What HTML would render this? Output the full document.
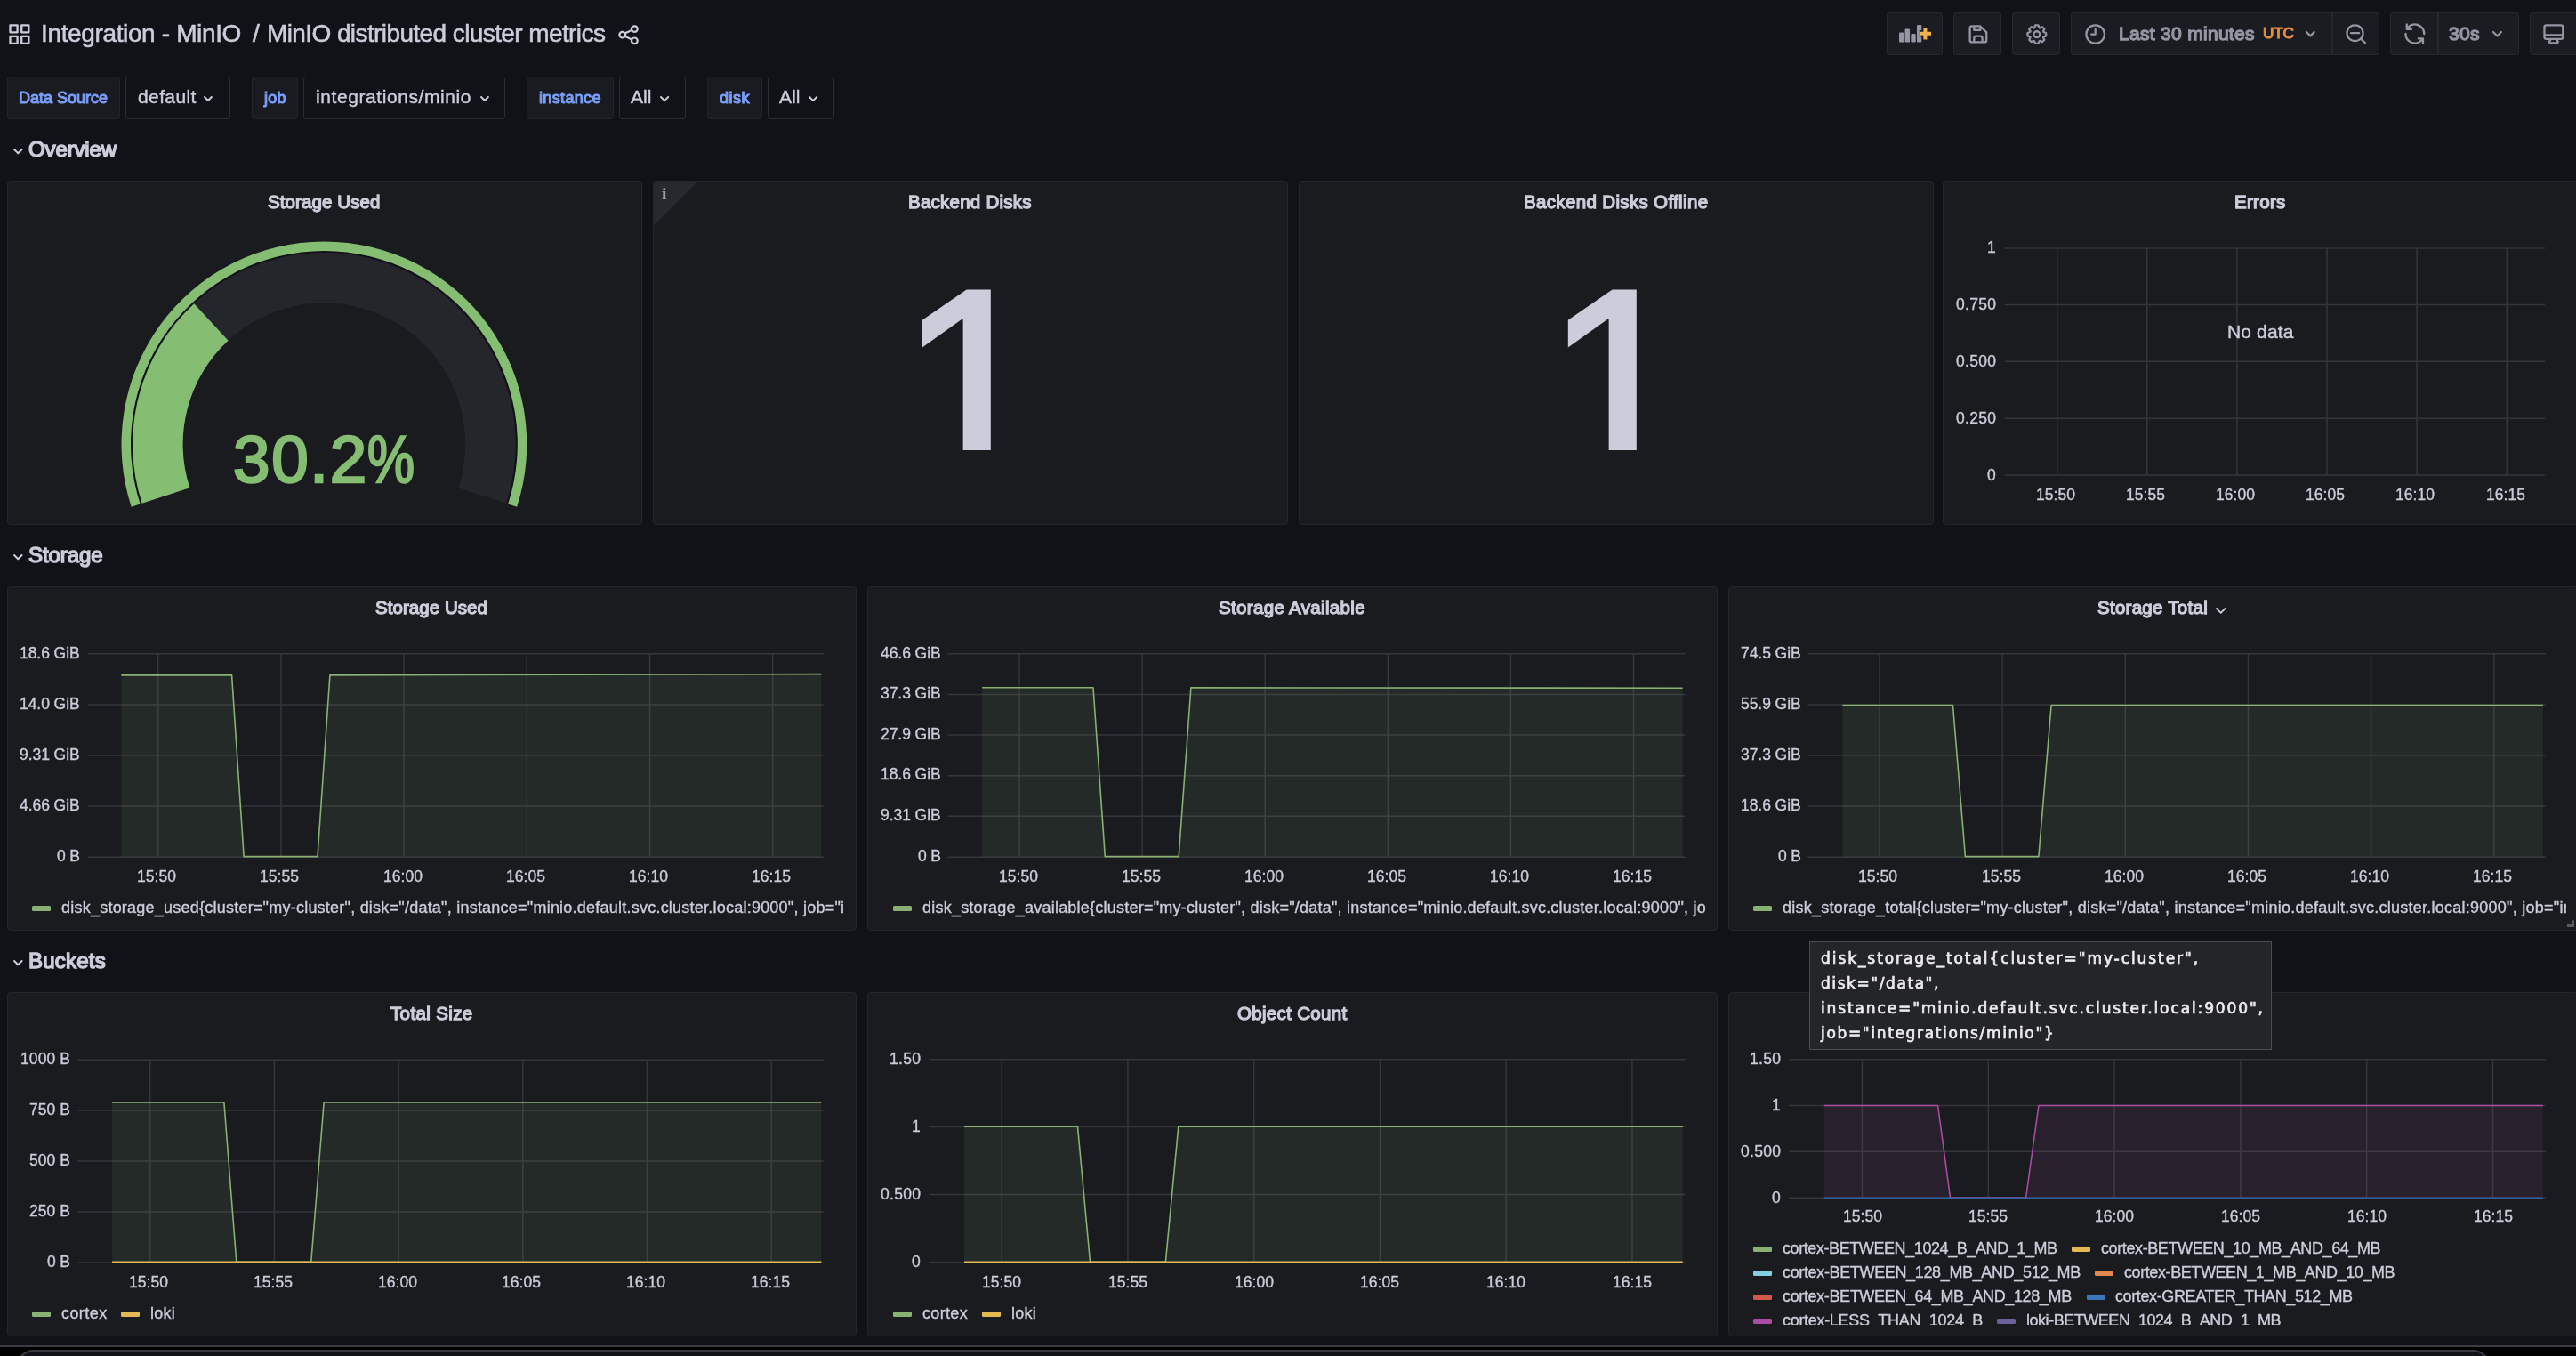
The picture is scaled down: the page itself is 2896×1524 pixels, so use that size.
<!DOCTYPE html>
<html lang="en"><head><meta charset="utf-8"><title>MinIO distributed cluster metrics - Grafana</title><style>
*{margin:0;padding:0}
html,body{width:2896px;height:1524px;overflow:hidden;background:#111217}
body{position:relative;font-family:"Liberation Sans",sans-serif;color:#ccccdb}
.abs,.t,.ic{position:absolute}
.bx{box-sizing:border-box}
.t{white-space:pre;display:block;will-change:transform}
article{overflow:hidden}
.ic{overflow:visible}
</style></head>
<body>
<header class="abs" style="left:0;top:0;width:2896px;height:76px"><svg class="ic" style="left:7.68px;top:25.23px" width="27.84" height="27.24" viewBox="0 0 24 24" preserveAspectRatio="none"><path fill="#ccccdb" d="M10,13H3a1,1,0,0,0-1,1v7a1,1,0,0,0,1,1h7a1,1,0,0,0,1-1V14A1,1,0,0,0,10,13ZM9,20H4V15H9ZM21,2H14a1,1,0,0,0-1,1v7a1,1,0,0,0,1,1h7a1,1,0,0,0,1-1V3A1,1,0,0,0,21,2ZM20,9H15V4h5Zm1,4H14a1,1,0,0,0-1,1v7a1,1,0,0,0,1,1h7a1,1,0,0,0,1-1V14A1,1,0,0,0,21,13Zm-1,7H15V15h5ZM10,2H3A1,1,0,0,0,2,3v7a1,1,0,0,0,1,1h7a1,1,0,0,0,1-1V3A1,1,0,0,0,10,2ZM9,9H4V4H9Z"/></svg>
<span class="t " style="left:46.00px;top:23.70px;font-size:28px;line-height:28px;color:#ccccdb;letter-spacing:-0.362px;-webkit-text-stroke:0.56px #ccccdb;">Integration - MinIO</span>
<span class="t " style="left:284.00px;top:23.70px;font-size:28px;line-height:28px;color:#ccccdb;letter-spacing:1.219px;-webkit-text-stroke:0.56px #ccccdb;">/</span>
<span class="t " style="left:300.00px;top:23.70px;font-size:28px;line-height:28px;color:#ccccdb;letter-spacing:-0.594px;-webkit-text-stroke:0.56px #ccccdb;">MinIO distributed cluster metrics</span>
<svg class="ic" style="left:692.94px;top:25.60px" width="27.12" height="26.40" viewBox="0 0 24 24" preserveAspectRatio="none"><path fill="#ccccdb" d="M18,14a4,4,0,0,0-3.08,1.48l-5.1-2.35a3.64,3.64,0,0,0,0-2.26l5.1-2.35A4,4,0,1,0,14,6a4.17,4.17,0,0,0,.07.71L8.79,9.14a4,4,0,1,0,0,5.72l5.28,2.43A4.17,4.17,0,0,0,14,18a4,4,0,1,0,4-4ZM18,4a2,2,0,1,1-2,2A2,2,0,0,1,18,4ZM6,14a2,2,0,1,1,2-2A2,2,0,0,1,6,14Zm12,6a2,2,0,1,1,2-2A2,2,0,0,1,18,20Z"/></svg>
<div class="abs bx" style="left:2121.00px;top:14.00px;width:63.00px;height:48.00px;background:#1b1c21;border:1.5px solid #26282d;border-radius:3px;"></div>
<div class="abs bx" style="left:2196.00px;top:14.00px;width:54.00px;height:48.00px;background:#1b1c21;border:1.5px solid #26282d;border-radius:3px;"></div>
<div class="abs bx" style="left:2262.00px;top:14.00px;width:54.00px;height:48.00px;background:#1b1c21;border:1.5px solid #26282d;border-radius:3px;"></div>
<div class="abs bx" style="left:2328.00px;top:14.00px;width:347.00px;height:48.00px;background:#1b1c21;border:1.5px solid #26282d;border-radius:3px;"></div>
<div class="abs bx" style="left:2687.00px;top:14.00px;width:145.00px;height:48.00px;background:#1b1c21;border:1.5px solid #26282d;border-radius:3px;"></div>
<div class="abs bx" style="left:2844.00px;top:14.00px;width:66.00px;height:48.00px;background:#1b1c21;border:1.5px solid #26282d;border-radius:3px;"></div>
<div class="abs" style="left:2621.00px;top:15.00px;width:1.50px;height:46.00px;background:#26282d"></div>
<div class="abs" style="left:2740.00px;top:15.00px;width:1.50px;height:46.00px;background:#26282d"></div>
<svg class="ic" style="left:2130px;top:24px" width="46" height="28"><rect x="5.0" y="12.5" width="5.3" height="10.9" rx="1" fill="#9595a3"/><rect x="11.6" y="8.5" width="5.4" height="14.9" rx="1" fill="#9595a3"/><rect x="18.3" y="14.0" width="5.4" height="9.4" rx="1" fill="#9595a3"/><rect x="25.0" y="4.0" width="5.3" height="19.4" rx="1" fill="#9595a3"/><path d="M27.8,13.8h13.2M34.4,7.2v13.4" stroke="#1b1c21" stroke-width="7.5" fill="none"/><path d="M27.8,13.8h13.2M34.4,7.2v13.4" stroke="#efb14d" stroke-width="4" fill="none"/></svg>
<svg class="ic" style="left:2209.52px;top:25.03px" width="27.87" height="26.93" viewBox="0 0 24 24" preserveAspectRatio="none"><path fill="#9595a3" d="M20.71,9.29l-6-6a1,1,0,0,0-.32-.21A1.09,1.09,0,0,0,14,3H6A3,3,0,0,0,3,6V18a3,3,0,0,0,3,3H18a3,3,0,0,0,3-3V10A1,1,0,0,0,20.71,9.29ZM9,5h4V7H9Zm6,14H9V16a1,1,0,0,1,1-1h4a1,1,0,0,1,1,1Zm4-1a1,1,0,0,1-1,1H17V16a3,3,0,0,0-3-3H10a3,3,0,0,0-3,3v3H6a1,1,0,0,1-1-1V6A1,1,0,0,1,6,5H7V8A1,1,0,0,0,8,9h6a1,1,0,0,0,1-1V6.41l4,4Z"/></svg>
<svg class="ic" style="left:2275.70px;top:24.92px" width="27.60" height="27.36" viewBox="0 0 24 24" preserveAspectRatio="none"><path fill="#9595a3" d="M21.32,9.55l-1.89-.63.89-1.78A1,1,0,0,0,20.13,6L18,3.87a1,1,0,0,0-1.15-.19l-1.78.89-.63-1.89A1,1,0,0,0,13.5,2h-3a1,1,0,0,0-.95.68L8.92,4.57,7.14,3.68A1,1,0,0,0,6,3.87L3.87,6a1,1,0,0,0-.19,1.15l.89,1.78-1.89.63A1,1,0,0,0,2,10.5v3a1,1,0,0,0,.68.95l1.89.63-.89,1.78A1,1,0,0,0,3.87,18L6,20.13a1,1,0,0,0,1.15.19l1.78-.89.63,1.89a1,1,0,0,0,.95.68h3a1,1,0,0,0,.95-.68l.63-1.89,1.78.89A1,1,0,0,0,18,20.13L20.13,18a1,1,0,0,0,.19-1.15l-.89-1.78,1.89-.63A1,1,0,0,0,22,13.5v-3A1,1,0,0,0,21.32,9.55ZM20,12.78l-1.2.4A2,2,0,0,0,17.64,16l.57,1.14-1.1,1.1L16,17.64a2,2,0,0,0-2.79,1.16l-.4,1.2H11.22l-.4-1.2A2,2,0,0,0,8,17.64l-1.14.57-1.1-1.1L6.36,16A2,2,0,0,0,5.2,13.18L4,12.78V11.22l1.2-.4A2,2,0,0,0,6.36,8L5.79,6.89l1.1-1.1L8,6.36A2,2,0,0,0,10.82,5.2l.4-1.2h1.56l.4,1.2A2,2,0,0,0,16,6.36l1.14-.57,1.1,1.1L17.64,8a2,2,0,0,0,1.16,2.79l1.2.4ZM12,8a4,4,0,1,0,4,4A4,4,0,0,0,12,8Zm0,6a2,2,0,1,1,2-2A2,2,0,0,1,12,14Z"/></svg>
<svg class="ic" style="left:2341.72px;top:24.84px" width="27.36" height="27.12" viewBox="0 0 24 24" preserveAspectRatio="none"><path fill="#9595a3" d="M12,2A10,10,0,1,0,22,12,10.01,10.01,0,0,0,12,2Zm0,18a8,8,0,1,1,8-8A8.01,8.01,0,0,1,12,20ZM12,6a1,1,0,0,0-1,1v4H8a1,1,0,0,0,0,2h4a1,1,0,0,0,1-1V7A1,1,0,0,0,12,6Z"/></svg>
<span class="t " style="left:2381.80px;top:27.02px;font-size:21px;line-height:21px;color:#9595a3;letter-spacing:0.302px;-webkit-text-stroke:1.30px #9595a3;">Last 30 minutes</span>
<span class="t " style="left:2544.40px;top:29.44px;font-size:17.2px;line-height:17.2px;color:#e38f3c;letter-spacing:-0.243px;-webkit-text-stroke:1.07px #e38f3c;">UTC</span>
<svg class="ic" style="left:2590.08px;top:33.22px" width="14.74" height="10.37"><path d="M3,3 L7.37,7.37 L11.74,3" fill="none" stroke="#9595a3" stroke-width="2.2" stroke-linecap="round" stroke-linejoin="round"/></svg>
<svg class="ic" style="left:2634.72px;top:24.88px" width="27.36" height="26.64" viewBox="0 0 24 24" preserveAspectRatio="none"><path fill="#9595a3" d="M21.71,20.29,18,16.61A9,9,0,1,0,16.61,18l3.68,3.68a1,1,0,0,0,1.42,0A1,1,0,0,0,21.71,20.29ZM11,18a7,7,0,1,1,7-7A7,7,0,0,1,11,18Zm4-8H7a1,1,0,0,0,0,2h8a1,1,0,0,0,0-2Z"/></svg>
<svg class="ic" style="left:2700.59px;top:24.26px" width="27.72" height="28.08" viewBox="0 0 24 24" preserveAspectRatio="none"><path fill="#9595a3" d="M19.91,15.51H15.38a1,1,0,0,0,0,2h2.4A8,8,0,0,1,4,12a1,1,0,0,0-2,0,10,10,0,0,0,16.88,7.23V21a1,1,0,0,0,2,0V16.5A1,1,0,0,0,19.91,15.51ZM12,2A10,10,0,0,0,5.12,4.77V3a1,1,0,0,0-2,0V7.5a1,1,0,0,0,1,1h4.5a1,1,0,0,0,0-2H6.22A8,8,0,0,1,20,12a1,1,0,0,0,2,0A10,10,0,0,0,12,2Z"/></svg>
<span class="t " style="left:2753.30px;top:27.02px;font-size:21px;line-height:21px;color:#9595a3;letter-spacing:0.280px;-webkit-text-stroke:1.30px #9595a3;">30s</span>
<svg class="ic" style="left:2799.58px;top:33.16px" width="14.94" height="10.47"><path d="M3,3 L7.47,7.47 L11.94,3" fill="none" stroke="#9595a3" stroke-width="2.2" stroke-linecap="round" stroke-linejoin="round"/></svg>
<svg class="ic" style="left:2857.49px;top:25.28px" width="27.72" height="26.64" viewBox="0 0 24 24" preserveAspectRatio="none"><path fill="#9595a3" d="M19,2H5A3,3,0,0,0,2,5V15a3,3,0,0,0,3,3H7.64l-.58,1a2,2,0,0,0,0,2,2,2,0,0,0,1.75,1h6.46A2,2,0,0,0,17,21a2,2,0,0,0,0-2l-.59-1H19a3,3,0,0,0,3-3V5A3,3,0,0,0,19,2ZM8.77,20,9.93,18h4.14l1.16,2ZM20,15a1,1,0,0,1-1,1H5a1,1,0,0,1-1-1V14H20Zm0-3H4V5A1,1,0,0,1,5,4H19a1,1,0,0,1,1,1Z"/></svg></header>
<nav class="abs" style="left:0;top:76px;width:2896px;height:64px"><div class="abs" style="left:0;top:-76px"><div class="abs bx" style="left:8.00px;top:86.00px;width:127.00px;height:48.00px;background:#1a1b20;border:1.5px solid #222429;border-radius:3px;"></div>
<span class="t " style="left:21.30px;top:100.76px;font-size:18px;line-height:18px;color:#799ef8;-webkit-text-stroke:1.12px #799ef8;">Data Source</span>
<div class="abs bx" style="left:141.00px;top:86.00px;width:118.00px;height:48.00px;background:#111217;border:1.5px solid #2a2c31;border-radius:3px;"></div>
<span class="t " style="left:154.90px;top:98.22px;font-size:21px;line-height:21px;color:#ccccdb;letter-spacing:0.391px;-webkit-text-stroke:0.42px #ccccdb;">default</span>
<svg class="ic" style="left:227.30px;top:105.83px" width="13.90" height="9.95"><path d="M3,3 L6.95,6.95 L10.90,3" fill="none" stroke="#ccccdb" stroke-width="2" stroke-linecap="round" stroke-linejoin="round"/></svg>
<div class="abs bx" style="left:283.20px;top:86.00px;width:51.50px;height:48.00px;background:#1a1b20;border:1.5px solid #222429;border-radius:3px;"></div>
<span class="t " style="left:296.60px;top:100.76px;font-size:18px;line-height:18px;color:#799ef8;letter-spacing:0.190px;-webkit-text-stroke:1.12px #799ef8;">job</span>
<div class="abs bx" style="left:341.30px;top:86.00px;width:226.50px;height:48.00px;background:#111217;border:1.5px solid #2a2c31;border-radius:3px;"></div>
<span class="t " style="left:355.00px;top:98.22px;font-size:21px;line-height:21px;color:#ccccdb;letter-spacing:0.578px;-webkit-text-stroke:0.42px #ccccdb;">integrations/minio</span>
<svg class="ic" style="left:537.60px;top:105.82px" width="13.90" height="9.95"><path d="M3,3 L6.95,6.95 L10.90,3" fill="none" stroke="#ccccdb" stroke-width="2" stroke-linecap="round" stroke-linejoin="round"/></svg>
<div class="abs bx" style="left:592.10px;top:86.00px;width:97.60px;height:48.00px;background:#1a1b20;border:1.5px solid #222429;border-radius:3px;"></div>
<span class="t " style="left:606.00px;top:100.76px;font-size:18px;line-height:18px;color:#799ef8;letter-spacing:0.344px;-webkit-text-stroke:1.12px #799ef8;">instance</span>
<div class="abs bx" style="left:696.00px;top:86.00px;width:74.80px;height:48.00px;background:#111217;border:1.5px solid #2a2c31;border-radius:3px;"></div>
<span class="t " style="left:709.30px;top:98.22px;font-size:21px;line-height:21px;color:#ccccdb;letter-spacing:0.052px;-webkit-text-stroke:0.42px #ccccdb;">All</span>
<svg class="ic" style="left:740.30px;top:105.75px" width="14.20" height="10.10"><path d="M3,3 L7.10,7.10 L11.20,3" fill="none" stroke="#ccccdb" stroke-width="2" stroke-linecap="round" stroke-linejoin="round"/></svg>
<div class="abs bx" style="left:795.30px;top:86.00px;width:61.30px;height:48.00px;background:#1a1b20;border:1.5px solid #222429;border-radius:3px;"></div>
<span class="t " style="left:808.80px;top:100.76px;font-size:18px;line-height:18px;color:#799ef8;letter-spacing:0.521px;-webkit-text-stroke:1.12px #799ef8;">disk</span>
<div class="abs bx" style="left:863.20px;top:86.00px;width:74.70px;height:48.00px;background:#111217;border:1.5px solid #2a2c31;border-radius:3px;"></div>
<span class="t " style="left:876.40px;top:98.22px;font-size:21px;line-height:21px;color:#ccccdb;letter-spacing:0.052px;-webkit-text-stroke:0.42px #ccccdb;">All</span>
<svg class="ic" style="left:907.40px;top:105.75px" width="14.20" height="10.10"><path d="M3,3 L7.10,7.10 L11.20,3" fill="none" stroke="#ccccdb" stroke-width="2" stroke-linecap="round" stroke-linejoin="round"/></svg></div></nav>
<section class="abs" style="left:0;top:0"><svg class="ic" style="left:12.60px;top:165.35px" width="14.60" height="10.30"><path d="M3,3 L7.30,7.30 L11.60,3" fill="none" stroke="#ccccdb" stroke-width="2" stroke-linecap="round" stroke-linejoin="round"/></svg>
<span class="t " style="left:32.00px;top:156.48px;font-size:24px;line-height:24px;color:#ccccdb;letter-spacing:-0.129px;-webkit-text-stroke:1.49px #ccccdb;">Overview</span></section>
<section class="abs" style="left:0;top:0"><svg class="ic" style="left:12.60px;top:621.35px" width="14.60" height="10.30"><path d="M3,3 L7.30,7.30 L11.60,3" fill="none" stroke="#ccccdb" stroke-width="2" stroke-linecap="round" stroke-linejoin="round"/></svg>
<span class="t " style="left:32.00px;top:612.48px;font-size:24px;line-height:24px;color:#ccccdb;letter-spacing:-0.066px;-webkit-text-stroke:1.49px #ccccdb;">Storage</span></section>
<section class="abs" style="left:0;top:0"><svg class="ic" style="left:12.60px;top:1077.35px" width="14.60" height="10.30"><path d="M3,3 L7.30,7.30 L11.60,3" fill="none" stroke="#ccccdb" stroke-width="2" stroke-linecap="round" stroke-linejoin="round"/></svg>
<span class="t " style="left:32.00px;top:1068.48px;font-size:24px;line-height:24px;color:#ccccdb;letter-spacing:0.232px;-webkit-text-stroke:1.49px #ccccdb;">Buckets</span></section>
<article class="abs bx" style="left:8px;top:203px;width:714px;height:387px;background:#191b1f;border:1px solid #24262b;border-radius:4px;"><div class="abs" style="left:-1px;top:-1px"><span class="t " style="left:293.20px;top:14.15px;font-size:20.5px;line-height:20.5px;color:#ccccdb;letter-spacing:0.103px;-webkit-text-stroke:1.27px #ccccdb;">Storage Used</span><svg class="ic" style="left:0;top:0" width="713" height="386"><path fill="#111217" d="M149.45,363.54A217.6,217.6 0 1 1 563.35,363.54L560.88,362.74A215,215 0 1 0 151.92,362.74Z"/><path fill="#85bd72" d="M139.65,366.72A227.9,227.9 0 1 1 573.15,366.72L563.16,363.48A217.4,217.4 0 1 0 149.64,363.48Z"/><path fill="#24262b" d="M151.64,362.83A215.3,215.3 0 1 1 561.16,362.83L507.43,345.37A158.8,158.8 0 1 0 205.37,345.37Z"/><path fill="#85bd72" d="M151.64,362.83A215.3,215.3 0 0 1 210.20,138.25L248.57,179.72A158.8,158.8 0 0 0 205.37,345.37Z"/></svg><span class="t" style="left:253.80px;top:276.94px;font-size:74.5px;line-height:74.5px;color:#85bd72;letter-spacing:1.7px;-webkit-text-stroke:2.6px #85bd72">30.2<span style="display:inline-block;letter-spacing:0;transform:scaleX(.8);transform-origin:0 0;margin-left:-0.8px">%</span></span></div></article>
<article class="abs bx" style="left:734px;top:203px;width:714px;height:387px;background:#191b1f;border:1px solid #24262b;border-radius:4px;"><div class="abs" style="left:-1px;top:-1px"><span class="t " style="left:287.15px;top:14.15px;font-size:20.5px;line-height:20.5px;color:#ccccdb;letter-spacing:0.239px;-webkit-text-stroke:1.27px #ccccdb;">Backend Disks</span><svg class="ic" style="left:1px;top:2px" width="50" height="50"><path d="M0,3 Q0,0 3,0 L48.5,0 L0,48.5Z" fill="#262a2f"/></svg><span class="t" style="left:9.7px;top:4px;font-size:19.5px;line-height:22px;font-family:'Liberation Serif',serif;font-weight:700;color:#9d9eab">i</span><div class="abs" style="left:0;top:97px;width:713px;height:206px;overflow:hidden"><span class="t " style="left:277.10px;top:-17.82px;font-size:295px;line-height:295px;color:#ccccdb;-webkit-text-stroke:5.10px #ccccdb;">1</span></div></div></article>
<article class="abs bx" style="left:1460px;top:203px;width:714px;height:387px;background:#191b1f;border:1px solid #24262b;border-radius:4px;"><div class="abs" style="left:-1px;top:-1px"><span class="t " style="left:252.80px;top:14.15px;font-size:20.5px;line-height:20.5px;color:#ccccdb;letter-spacing:0.345px;-webkit-text-stroke:1.27px #ccccdb;">Backend Disks Offline</span><div class="abs" style="left:0;top:97px;width:713px;height:206px;overflow:hidden"><span class="t " style="left:277.10px;top:-17.82px;font-size:295px;line-height:295px;color:#ccccdb;-webkit-text-stroke:5.10px #ccccdb;">1</span></div></div></article>
<article class="abs bx" style="left:2184px;top:203px;width:715px;height:387px;background:#191b1f;border:1px solid #24262b;border-radius:4px;"><div class="abs" style="left:-1px;top:-1px"><span class="t " style="left:327.70px;top:14.15px;font-size:20.5px;line-height:20.5px;color:#ccccdb;letter-spacing:0.298px;-webkit-text-stroke:1.27px #ccccdb;">Errors</span><svg class="ic" style="left:0;top:0" width="714" height="387"><path d="M69.7,75.90H677.0" stroke="#34363b" stroke-width="1.5"/><path d="M69.7,139.40H677.0" stroke="#34363b" stroke-width="1.5"/><path d="M69.7,203.30H677.0" stroke="#34363b" stroke-width="1.5"/><path d="M69.7,267.20H677.0" stroke="#34363b" stroke-width="1.5"/><path d="M69.7,331.10H677.0" stroke="#34363b" stroke-width="1.5"/><path d="M128.70,75.9V331.1" stroke="#34363b" stroke-width="1.5"/><path d="M229.80,75.9V331.1" stroke="#34363b" stroke-width="1.5"/><path d="M330.90,75.9V331.1" stroke="#34363b" stroke-width="1.5"/><path d="M432.00,75.9V331.1" stroke="#34363b" stroke-width="1.5"/><path d="M533.10,75.9V331.1" stroke="#34363b" stroke-width="1.5"/><path d="M634.20,75.9V331.1" stroke="#34363b" stroke-width="1.5"/></svg><span class="t " style="left:50.30px;top:67.49px;font-size:17.5px;line-height:17.5px;color:#ccccdb;letter-spacing:0.366px;-webkit-text-stroke:0.35px #ccccdb;">1</span>
<span class="t " style="left:15.10px;top:130.99px;font-size:17.5px;line-height:17.5px;color:#ccccdb;letter-spacing:0.301px;-webkit-text-stroke:0.35px #ccccdb;">0.750</span>
<span class="t " style="left:15.10px;top:194.89px;font-size:17.5px;line-height:17.5px;color:#ccccdb;letter-spacing:0.301px;-webkit-text-stroke:0.35px #ccccdb;">0.500</span>
<span class="t " style="left:15.10px;top:258.79px;font-size:17.5px;line-height:17.5px;color:#ccccdb;letter-spacing:0.301px;-webkit-text-stroke:0.35px #ccccdb;">0.250</span>
<span class="t " style="left:50.30px;top:322.69px;font-size:17.5px;line-height:17.5px;color:#ccccdb;letter-spacing:0.366px;-webkit-text-stroke:0.35px #ccccdb;">0</span>
<span class="t " style="left:105.00px;top:344.69px;font-size:17.5px;line-height:17.5px;color:#ccccdb;letter-spacing:0.041px;-webkit-text-stroke:0.35px #ccccdb;">15:50</span>
<span class="t " style="left:206.10px;top:344.69px;font-size:17.5px;line-height:17.5px;color:#ccccdb;letter-spacing:0.041px;-webkit-text-stroke:0.35px #ccccdb;">15:55</span>
<span class="t " style="left:307.20px;top:344.69px;font-size:17.5px;line-height:17.5px;color:#ccccdb;letter-spacing:0.041px;-webkit-text-stroke:0.35px #ccccdb;">16:00</span>
<span class="t " style="left:408.30px;top:344.69px;font-size:17.5px;line-height:17.5px;color:#ccccdb;letter-spacing:0.041px;-webkit-text-stroke:0.35px #ccccdb;">16:05</span>
<span class="t " style="left:509.40px;top:344.69px;font-size:17.5px;line-height:17.5px;color:#ccccdb;letter-spacing:0.041px;-webkit-text-stroke:0.35px #ccccdb;">16:10</span>
<span class="t " style="left:610.50px;top:344.69px;font-size:17.5px;line-height:17.5px;color:#ccccdb;letter-spacing:0.041px;-webkit-text-stroke:0.35px #ccccdb;">16:15</span>
<span class="t " style="left:319.75px;top:158.72px;font-size:21px;line-height:21px;color:#ccccdb;letter-spacing:0.134px;-webkit-text-stroke:0.42px #ccccdb;">No data</span></div></article>
<article class="abs bx" style="left:8px;top:659px;width:955px;height:387px;background:#191b1f;border:1px solid #24262b;border-radius:4px;"><div class="abs" style="left:-1px;top:-1px"><span class="t " style="left:414.00px;top:14.15px;font-size:20.5px;line-height:20.5px;color:#ccccdb;letter-spacing:0.053px;-webkit-text-stroke:1.27px #ccccdb;">Storage Used</span><svg class="ic" style="left:0;top:0" width="956" height="387"><path d="M90.7,75.80H918.3" stroke="#34363b" stroke-width="1.5"/><path d="M90.7,133.00H918.3" stroke="#34363b" stroke-width="1.5"/><path d="M90.7,190.00H918.3" stroke="#34363b" stroke-width="1.5"/><path d="M90.7,247.10H918.3" stroke="#34363b" stroke-width="1.5"/><path d="M90.7,304.30H918.3" stroke="#34363b" stroke-width="1.5"/><path d="M169.70,75.8V304.3" stroke="#34363b" stroke-width="1.5"/><path d="M307.90,75.8V304.3" stroke="#34363b" stroke-width="1.5"/><path d="M446.10,75.8V304.3" stroke="#34363b" stroke-width="1.5"/><path d="M584.30,75.8V304.3" stroke="#34363b" stroke-width="1.5"/><path d="M722.50,75.8V304.3" stroke="#34363b" stroke-width="1.5"/><path d="M860.70,75.8V304.3" stroke="#34363b" stroke-width="1.5"/><path d="M128.3,99.9 L252.6,99.9 L266.1,303.6 L349.0,303.6 L362.9,99.9 L915.3,98.6 L915.3,304.3 L128.3,304.3Z" fill="#89b174" fill-opacity="0.1"/><path d="M128.3,99.9 L252.6,99.9 L266.1,303.6 L349.0,303.6 L362.9,99.9 L915.3,98.6" fill="none" stroke="#89b174" stroke-width="1.6" stroke-linejoin="round"/></svg><span class="t " style="left:14.20px;top:66.59px;font-size:17.5px;line-height:17.5px;color:#ccccdb;letter-spacing:-0.064px;-webkit-text-stroke:0.35px #ccccdb;">18.6 GiB</span>
<span class="t " style="left:14.20px;top:123.79px;font-size:17.5px;line-height:17.5px;color:#ccccdb;letter-spacing:-0.064px;-webkit-text-stroke:0.35px #ccccdb;">14.0 GiB</span>
<span class="t " style="left:14.20px;top:180.79px;font-size:17.5px;line-height:17.5px;color:#ccccdb;letter-spacing:-0.064px;-webkit-text-stroke:0.35px #ccccdb;">9.31 GiB</span>
<span class="t " style="left:14.20px;top:237.89px;font-size:17.5px;line-height:17.5px;color:#ccccdb;letter-spacing:-0.064px;-webkit-text-stroke:0.35px #ccccdb;">4.66 GiB</span>
<span class="t " style="left:56.00px;top:295.09px;font-size:17.5px;line-height:17.5px;color:#ccccdb;letter-spacing:-0.160px;-webkit-text-stroke:0.35px #ccccdb;">0 B</span>
<span class="t " style="left:146.25px;top:317.59px;font-size:17.5px;line-height:17.5px;color:#ccccdb;letter-spacing:0.041px;-webkit-text-stroke:0.35px #ccccdb;">15:50</span>
<span class="t " style="left:284.45px;top:317.59px;font-size:17.5px;line-height:17.5px;color:#ccccdb;letter-spacing:0.041px;-webkit-text-stroke:0.35px #ccccdb;">15:55</span>
<span class="t " style="left:422.65px;top:317.59px;font-size:17.5px;line-height:17.5px;color:#ccccdb;letter-spacing:0.041px;-webkit-text-stroke:0.35px #ccccdb;">16:00</span>
<span class="t " style="left:560.85px;top:317.59px;font-size:17.5px;line-height:17.5px;color:#ccccdb;letter-spacing:0.041px;-webkit-text-stroke:0.35px #ccccdb;">16:05</span>
<span class="t " style="left:699.05px;top:317.59px;font-size:17.5px;line-height:17.5px;color:#ccccdb;letter-spacing:0.041px;-webkit-text-stroke:0.35px #ccccdb;">16:10</span>
<span class="t " style="left:837.25px;top:317.59px;font-size:17.5px;line-height:17.5px;color:#ccccdb;letter-spacing:0.041px;-webkit-text-stroke:0.35px #ccccdb;">16:15</span>
<div class="abs" style="left:27.80px;top:358.80px;width:21.00px;height:6.00px;background:#89b174;border-radius:1.5px"></div>
<div class="abs" style="left:56.9px;top:347.8px;width:885.0px;height:28px;overflow:hidden"><span class="t " style="left:4.00px;top:4.26px;font-size:18px;line-height:18px;color:#ccccdb;letter-spacing:0.230px;-webkit-text-stroke:0.36px #ccccdb;">disk_storage_used{cluster=&quot;my-cluster&quot;, disk=&quot;/data&quot;, instance=&quot;minio.default.svc.cluster.local:9000&quot;, job=&quot;integrations/minio&quot;}</span></div></div></article>
<article class="abs bx" style="left:975px;top:659px;width:956px;height:387px;background:#191b1f;border:1px solid #24262b;border-radius:4px;"><div class="abs" style="left:-1px;top:-1px"><span class="t " style="left:395.00px;top:14.15px;font-size:20.5px;line-height:20.5px;color:#ccccdb;letter-spacing:0.342px;-webkit-text-stroke:1.27px #ccccdb;">Storage Available</span><svg class="ic" style="left:0;top:0" width="956" height="387"><path d="M90.4,75.80H919.7" stroke="#34363b" stroke-width="1.5"/><path d="M90.4,121.40H919.7" stroke="#34363b" stroke-width="1.5"/><path d="M90.4,167.00H919.7" stroke="#34363b" stroke-width="1.5"/><path d="M90.4,212.70H919.7" stroke="#34363b" stroke-width="1.5"/><path d="M90.4,258.30H919.7" stroke="#34363b" stroke-width="1.5"/><path d="M90.4,304.30H919.7" stroke="#34363b" stroke-width="1.5"/><path d="M171.00,75.8V304.3" stroke="#34363b" stroke-width="1.5"/><path d="M309.10,75.8V304.3" stroke="#34363b" stroke-width="1.5"/><path d="M447.20,75.8V304.3" stroke="#34363b" stroke-width="1.5"/><path d="M585.30,75.8V304.3" stroke="#34363b" stroke-width="1.5"/><path d="M723.40,75.8V304.3" stroke="#34363b" stroke-width="1.5"/><path d="M861.50,75.8V304.3" stroke="#34363b" stroke-width="1.5"/><path d="M129.2,113.8 L254.0,113.8 L267.3,303.6 L350.2,303.6 L363.9,113.8 L916.7,114.3 L916.7,304.3 L129.2,304.3Z" fill="#89b174" fill-opacity="0.1"/><path d="M129.2,113.8 L254.0,113.8 L267.3,303.6 L350.2,303.6 L363.9,113.8 L916.7,114.3" fill="none" stroke="#89b174" stroke-width="1.6" stroke-linejoin="round"/></svg><span class="t " style="left:15.40px;top:66.59px;font-size:17.5px;line-height:17.5px;color:#ccccdb;letter-spacing:-0.064px;-webkit-text-stroke:0.35px #ccccdb;">46.6 GiB</span>
<span class="t " style="left:15.40px;top:112.19px;font-size:17.5px;line-height:17.5px;color:#ccccdb;letter-spacing:-0.064px;-webkit-text-stroke:0.35px #ccccdb;">37.3 GiB</span>
<span class="t " style="left:15.40px;top:157.79px;font-size:17.5px;line-height:17.5px;color:#ccccdb;letter-spacing:-0.064px;-webkit-text-stroke:0.35px #ccccdb;">27.9 GiB</span>
<span class="t " style="left:15.40px;top:203.49px;font-size:17.5px;line-height:17.5px;color:#ccccdb;letter-spacing:-0.064px;-webkit-text-stroke:0.35px #ccccdb;">18.6 GiB</span>
<span class="t " style="left:15.40px;top:249.09px;font-size:17.5px;line-height:17.5px;color:#ccccdb;letter-spacing:-0.064px;-webkit-text-stroke:0.35px #ccccdb;">9.31 GiB</span>
<span class="t " style="left:57.20px;top:295.09px;font-size:17.5px;line-height:17.5px;color:#ccccdb;letter-spacing:-0.160px;-webkit-text-stroke:0.35px #ccccdb;">0 B</span>
<span class="t " style="left:147.55px;top:317.59px;font-size:17.5px;line-height:17.5px;color:#ccccdb;letter-spacing:0.041px;-webkit-text-stroke:0.35px #ccccdb;">15:50</span>
<span class="t " style="left:285.65px;top:317.59px;font-size:17.5px;line-height:17.5px;color:#ccccdb;letter-spacing:0.041px;-webkit-text-stroke:0.35px #ccccdb;">15:55</span>
<span class="t " style="left:423.75px;top:317.59px;font-size:17.5px;line-height:17.5px;color:#ccccdb;letter-spacing:0.041px;-webkit-text-stroke:0.35px #ccccdb;">16:00</span>
<span class="t " style="left:561.85px;top:317.59px;font-size:17.5px;line-height:17.5px;color:#ccccdb;letter-spacing:0.041px;-webkit-text-stroke:0.35px #ccccdb;">16:05</span>
<span class="t " style="left:699.95px;top:317.59px;font-size:17.5px;line-height:17.5px;color:#ccccdb;letter-spacing:0.041px;-webkit-text-stroke:0.35px #ccccdb;">16:10</span>
<span class="t " style="left:838.05px;top:317.59px;font-size:17.5px;line-height:17.5px;color:#ccccdb;letter-spacing:0.041px;-webkit-text-stroke:0.35px #ccccdb;">16:15</span>
<div class="abs" style="left:29.10px;top:358.80px;width:21.00px;height:6.00px;background:#89b174;border-radius:1.5px"></div>
<div class="abs" style="left:58.2px;top:347.8px;width:885.1px;height:28px;overflow:hidden"><span class="t " style="left:4.00px;top:4.26px;font-size:18px;line-height:18px;color:#ccccdb;letter-spacing:0.225px;-webkit-text-stroke:0.36px #ccccdb;">disk_storage_available{cluster=&quot;my-cluster&quot;, disk=&quot;/data&quot;, instance=&quot;minio.default.svc.cluster.local:9000&quot;, job=&quot;integrations/minio&quot;}</span></div></div></article>
<article class="abs bx" style="left:1943px;top:659px;width:956px;height:387px;background:#191b1f;border:1px solid #24262b;border-radius:4px;"><div class="abs" style="left:-1px;top:-1px"><span class="t " style="left:414.50px;top:14.15px;font-size:20.5px;line-height:20.5px;color:#ccccdb;letter-spacing:0.274px;-webkit-text-stroke:1.27px #ccccdb;">Storage Total</span><svg class="ic" style="left:546.22px;top:21.61px" width="15.56" height="10.78"><path d="M3,3 L7.78,7.78 L12.56,3" fill="none" stroke="#ccccdb" stroke-width="1.8" stroke-linecap="round" stroke-linejoin="round"/></svg><svg class="ic" style="left:0;top:0" width="956" height="387"><path d="M89.4,75.80H918.9" stroke="#34363b" stroke-width="1.5"/><path d="M89.4,132.90H918.9" stroke="#34363b" stroke-width="1.5"/><path d="M89.4,189.90H918.9" stroke="#34363b" stroke-width="1.5"/><path d="M89.4,246.90H918.9" stroke="#34363b" stroke-width="1.5"/><path d="M89.4,304.30H918.9" stroke="#34363b" stroke-width="1.5"/><path d="M170.00,75.8V304.3" stroke="#34363b" stroke-width="1.5"/><path d="M308.15,75.8V304.3" stroke="#34363b" stroke-width="1.5"/><path d="M446.30,75.8V304.3" stroke="#34363b" stroke-width="1.5"/><path d="M584.45,75.8V304.3" stroke="#34363b" stroke-width="1.5"/><path d="M722.60,75.8V304.3" stroke="#34363b" stroke-width="1.5"/><path d="M860.75,75.8V304.3" stroke="#34363b" stroke-width="1.5"/><path d="M128.4,133.6 L252.5,133.6 L266.4,303.6 L348.9,303.6 L363.1,133.6 L915.9,133.6 L915.9,304.3 L128.4,304.3Z" fill="#89b174" fill-opacity="0.1"/><path d="M128.4,133.6 L252.5,133.6 L266.4,303.6 L348.9,303.6 L363.1,133.6 L915.9,133.6" fill="none" stroke="#89b174" stroke-width="1.6" stroke-linejoin="round"/></svg><span class="t " style="left:13.70px;top:66.59px;font-size:17.5px;line-height:17.5px;color:#ccccdb;letter-spacing:-0.064px;-webkit-text-stroke:0.35px #ccccdb;">74.5 GiB</span>
<span class="t " style="left:13.70px;top:123.69px;font-size:17.5px;line-height:17.5px;color:#ccccdb;letter-spacing:-0.064px;-webkit-text-stroke:0.35px #ccccdb;">55.9 GiB</span>
<span class="t " style="left:13.70px;top:180.69px;font-size:17.5px;line-height:17.5px;color:#ccccdb;letter-spacing:-0.064px;-webkit-text-stroke:0.35px #ccccdb;">37.3 GiB</span>
<span class="t " style="left:13.70px;top:237.69px;font-size:17.5px;line-height:17.5px;color:#ccccdb;letter-spacing:-0.064px;-webkit-text-stroke:0.35px #ccccdb;">18.6 GiB</span>
<span class="t " style="left:55.50px;top:295.09px;font-size:17.5px;line-height:17.5px;color:#ccccdb;letter-spacing:-0.160px;-webkit-text-stroke:0.35px #ccccdb;">0 B</span>
<span class="t " style="left:146.40px;top:317.59px;font-size:17.5px;line-height:17.5px;color:#ccccdb;letter-spacing:0.041px;-webkit-text-stroke:0.35px #ccccdb;">15:50</span>
<span class="t " style="left:284.55px;top:317.59px;font-size:17.5px;line-height:17.5px;color:#ccccdb;letter-spacing:0.041px;-webkit-text-stroke:0.35px #ccccdb;">15:55</span>
<span class="t " style="left:422.70px;top:317.59px;font-size:17.5px;line-height:17.5px;color:#ccccdb;letter-spacing:0.041px;-webkit-text-stroke:0.35px #ccccdb;">16:00</span>
<span class="t " style="left:560.85px;top:317.59px;font-size:17.5px;line-height:17.5px;color:#ccccdb;letter-spacing:0.041px;-webkit-text-stroke:0.35px #ccccdb;">16:05</span>
<span class="t " style="left:699.00px;top:317.59px;font-size:17.5px;line-height:17.5px;color:#ccccdb;letter-spacing:0.041px;-webkit-text-stroke:0.35px #ccccdb;">16:10</span>
<span class="t " style="left:837.15px;top:317.59px;font-size:17.5px;line-height:17.5px;color:#ccccdb;letter-spacing:0.041px;-webkit-text-stroke:0.35px #ccccdb;">16:15</span>
<div class="abs" style="left:28.20px;top:358.80px;width:21.00px;height:6.00px;background:#89b174;border-radius:1.5px"></div>
<div class="abs" style="left:57.2px;top:347.8px;width:884.7px;height:28px;overflow:hidden"><span class="t " style="left:4.00px;top:4.26px;font-size:18px;line-height:18px;color:#ccccdb;letter-spacing:0.250px;-webkit-text-stroke:0.36px #ccccdb;">disk_storage_total{cluster=&quot;my-cluster&quot;, disk=&quot;/data&quot;, instance=&quot;minio.default.svc.cluster.local:9000&quot;, job=&quot;integrations/minio&quot;}</span></div></div></article>
<article class="abs bx" style="left:8px;top:1115px;width:955px;height:387px;background:#191b1f;border:1px solid #24262b;border-radius:4px;"><div class="abs" style="left:-1px;top:-1px"><span class="t " style="left:430.70px;top:14.15px;font-size:20.5px;line-height:20.5px;color:#ccccdb;letter-spacing:0.371px;-webkit-text-stroke:1.27px #ccccdb;">Total Size</span><svg class="ic" style="left:0;top:0" width="956" height="387"><path d="M79.4,76.20H918.3" stroke="#34363b" stroke-width="1.5"/><path d="M79.4,133.10H918.3" stroke="#34363b" stroke-width="1.5"/><path d="M79.4,190.10H918.3" stroke="#34363b" stroke-width="1.5"/><path d="M79.4,247.10H918.3" stroke="#34363b" stroke-width="1.5"/><path d="M79.4,304.00H918.3" stroke="#34363b" stroke-width="1.5"/><path d="M160.70,76.2V304.0" stroke="#34363b" stroke-width="1.5"/><path d="M300.40,76.2V304.0" stroke="#34363b" stroke-width="1.5"/><path d="M440.10,76.2V304.0" stroke="#34363b" stroke-width="1.5"/><path d="M579.80,76.2V304.0" stroke="#34363b" stroke-width="1.5"/><path d="M719.50,76.2V304.0" stroke="#34363b" stroke-width="1.5"/><path d="M859.20,76.2V304.0" stroke="#34363b" stroke-width="1.5"/><path d="M118.1,124.0 L243.9,124.0 L257.8,303.3 L341.8,303.3 L356.1,124.0 L915.3,124.0 L915.3,304.0 L118.1,304.0Z" fill="#89b174" fill-opacity="0.1"/><path d="M118.1,124.0 L243.9,124.0 L257.8,303.3 L341.8,303.3 L356.1,124.0 L915.3,124.0" fill="none" stroke="#89b174" stroke-width="1.6" stroke-linejoin="round"/><path d="M118.1,303.3 L915.3,303.3" fill="none" stroke="#e2ba53" stroke-width="1.8" stroke-linejoin="round"/></svg><span class="t " style="left:14.50px;top:67.09px;font-size:17.5px;line-height:17.5px;color:#ccccdb;letter-spacing:0.105px;-webkit-text-stroke:0.35px #ccccdb;">1000 B</span>
<span class="t " style="left:24.60px;top:123.99px;font-size:17.5px;line-height:17.5px;color:#ccccdb;letter-spacing:0.053px;-webkit-text-stroke:0.35px #ccccdb;">750 B</span>
<span class="t " style="left:24.60px;top:180.99px;font-size:17.5px;line-height:17.5px;color:#ccccdb;letter-spacing:0.053px;-webkit-text-stroke:0.35px #ccccdb;">500 B</span>
<span class="t " style="left:24.60px;top:237.99px;font-size:17.5px;line-height:17.5px;color:#ccccdb;letter-spacing:0.053px;-webkit-text-stroke:0.35px #ccccdb;">250 B</span>
<span class="t " style="left:44.80px;top:294.89px;font-size:17.5px;line-height:17.5px;color:#ccccdb;letter-spacing:-0.160px;-webkit-text-stroke:0.35px #ccccdb;">0 B</span>
<span class="t " style="left:137.25px;top:318.19px;font-size:17.5px;line-height:17.5px;color:#ccccdb;letter-spacing:0.041px;-webkit-text-stroke:0.35px #ccccdb;">15:50</span>
<span class="t " style="left:276.95px;top:318.19px;font-size:17.5px;line-height:17.5px;color:#ccccdb;letter-spacing:0.041px;-webkit-text-stroke:0.35px #ccccdb;">15:55</span>
<span class="t " style="left:416.65px;top:318.19px;font-size:17.5px;line-height:17.5px;color:#ccccdb;letter-spacing:0.041px;-webkit-text-stroke:0.35px #ccccdb;">16:00</span>
<span class="t " style="left:556.35px;top:318.19px;font-size:17.5px;line-height:17.5px;color:#ccccdb;letter-spacing:0.041px;-webkit-text-stroke:0.35px #ccccdb;">16:05</span>
<span class="t " style="left:696.05px;top:318.19px;font-size:17.5px;line-height:17.5px;color:#ccccdb;letter-spacing:0.041px;-webkit-text-stroke:0.35px #ccccdb;">16:10</span>
<span class="t " style="left:835.75px;top:318.19px;font-size:17.5px;line-height:17.5px;color:#ccccdb;letter-spacing:0.041px;-webkit-text-stroke:0.35px #ccccdb;">16:15</span>
<div class="abs" style="left:27.80px;top:359.00px;width:21.00px;height:6.00px;background:#89b174;border-radius:1.5px"></div>
<span class="t " style="left:60.90px;top:352.26px;font-size:18px;line-height:18px;color:#ccccdb;letter-spacing:0.428px;-webkit-text-stroke:0.36px #ccccdb;">cortex</span>
<div class="abs" style="left:127.60px;top:359.00px;width:21.00px;height:6.00px;background:#e2ba53;border-radius:1.5px"></div>
<span class="t " style="left:161.10px;top:352.26px;font-size:18px;line-height:18px;color:#ccccdb;letter-spacing:0.221px;-webkit-text-stroke:0.36px #ccccdb;">loki</span></div></article>
<article class="abs bx" style="left:975px;top:1115px;width:956px;height:387px;background:#191b1f;border:1px solid #24262b;border-radius:4px;"><div class="abs" style="left:-1px;top:-1px"><span class="t " style="left:415.75px;top:14.15px;font-size:20.5px;line-height:20.5px;color:#ccccdb;letter-spacing:0.320px;-webkit-text-stroke:1.27px #ccccdb;">Object Count</span><svg class="ic" style="left:0;top:0" width="956" height="387"><path d="M69.5,75.80H919.7" stroke="#34363b" stroke-width="1.5"/><path d="M69.5,151.60H919.7" stroke="#34363b" stroke-width="1.5"/><path d="M69.5,227.60H919.7" stroke="#34363b" stroke-width="1.5"/><path d="M69.5,303.70H919.7" stroke="#34363b" stroke-width="1.5"/><path d="M151.20,75.8V303.7" stroke="#34363b" stroke-width="1.5"/><path d="M292.95,75.8V303.7" stroke="#34363b" stroke-width="1.5"/><path d="M434.70,75.8V303.7" stroke="#34363b" stroke-width="1.5"/><path d="M576.45,75.8V303.7" stroke="#34363b" stroke-width="1.5"/><path d="M718.20,75.8V303.7" stroke="#34363b" stroke-width="1.5"/><path d="M859.95,75.8V303.7" stroke="#34363b" stroke-width="1.5"/><path d="M109.0,151.1 L236.5,151.1 L250.5,303.3 L335.4,303.3 L349.8,151.1 L916.7,151.1 L916.7,303.7 L109.0,303.7Z" fill="#89b174" fill-opacity="0.1"/><path d="M109.0,151.1 L236.5,151.1 L250.5,303.3 L335.4,303.3 L349.8,151.1 L916.7,151.1" fill="none" stroke="#89b174" stroke-width="1.6" stroke-linejoin="round"/><path d="M109.0,303.3 L916.7,303.3" fill="none" stroke="#e2ba53" stroke-width="1.8" stroke-linejoin="round"/></svg><span class="t " style="left:25.30px;top:67.39px;font-size:17.5px;line-height:17.5px;color:#ccccdb;letter-spacing:0.284px;-webkit-text-stroke:0.35px #ccccdb;">1.50</span>
<span class="t " style="left:50.40px;top:143.19px;font-size:17.5px;line-height:17.5px;color:#ccccdb;letter-spacing:0.366px;-webkit-text-stroke:0.35px #ccccdb;">1</span>
<span class="t " style="left:15.20px;top:219.19px;font-size:17.5px;line-height:17.5px;color:#ccccdb;letter-spacing:0.301px;-webkit-text-stroke:0.35px #ccccdb;">0.500</span>
<span class="t " style="left:50.40px;top:295.29px;font-size:17.5px;line-height:17.5px;color:#ccccdb;letter-spacing:0.366px;-webkit-text-stroke:0.35px #ccccdb;">0</span>
<span class="t " style="left:129.20px;top:318.19px;font-size:17.5px;line-height:17.5px;color:#ccccdb;letter-spacing:0.041px;-webkit-text-stroke:0.35px #ccccdb;">15:50</span>
<span class="t " style="left:270.95px;top:318.19px;font-size:17.5px;line-height:17.5px;color:#ccccdb;letter-spacing:0.041px;-webkit-text-stroke:0.35px #ccccdb;">15:55</span>
<span class="t " style="left:412.70px;top:318.19px;font-size:17.5px;line-height:17.5px;color:#ccccdb;letter-spacing:0.041px;-webkit-text-stroke:0.35px #ccccdb;">16:00</span>
<span class="t " style="left:554.45px;top:318.19px;font-size:17.5px;line-height:17.5px;color:#ccccdb;letter-spacing:0.041px;-webkit-text-stroke:0.35px #ccccdb;">16:05</span>
<span class="t " style="left:696.20px;top:318.19px;font-size:17.5px;line-height:17.5px;color:#ccccdb;letter-spacing:0.041px;-webkit-text-stroke:0.35px #ccccdb;">16:10</span>
<span class="t " style="left:837.95px;top:318.19px;font-size:17.5px;line-height:17.5px;color:#ccccdb;letter-spacing:0.041px;-webkit-text-stroke:0.35px #ccccdb;">16:15</span>
<div class="abs" style="left:29.10px;top:359.00px;width:21.00px;height:6.00px;background:#89b174;border-radius:1.5px"></div>
<span class="t " style="left:62.20px;top:352.26px;font-size:18px;line-height:18px;color:#ccccdb;letter-spacing:0.328px;-webkit-text-stroke:0.36px #ccccdb;">cortex</span>
<div class="abs" style="left:129.20px;top:359.00px;width:21.00px;height:6.00px;background:#e2ba53;border-radius:1.5px"></div>
<span class="t " style="left:162.30px;top:352.26px;font-size:18px;line-height:18px;color:#ccccdb;letter-spacing:0.271px;-webkit-text-stroke:0.36px #ccccdb;">loki</span></div></article>
<article class="abs bx" style="left:1943px;top:1115px;width:956px;height:387px;background:#191b1f;border:1px solid #24262b;border-radius:4px;"><div class="abs" style="left:-1px;top:-1px"><svg class="ic" style="left:0;top:0" width="956" height="387"><path d="M68.4,75.70H918.9" stroke="#34363b" stroke-width="1.5"/><path d="M68.4,127.50H918.9" stroke="#34363b" stroke-width="1.5"/><path d="M68.4,179.30H918.9" stroke="#34363b" stroke-width="1.5"/><path d="M68.4,231.20H918.9" stroke="#34363b" stroke-width="1.5"/><path d="M150.50,75.7V231.2" stroke="#34363b" stroke-width="1.5"/><path d="M292.30,75.7V231.2" stroke="#34363b" stroke-width="1.5"/><path d="M434.10,75.7V231.2" stroke="#34363b" stroke-width="1.5"/><path d="M575.90,75.7V231.2" stroke="#34363b" stroke-width="1.5"/><path d="M717.70,75.7V231.2" stroke="#34363b" stroke-width="1.5"/><path d="M859.50,75.7V231.2" stroke="#34363b" stroke-width="1.5"/><path d="M107.7,127.5 L235.6,127.5 L249.5,231.0 L334.6,231.0 L348.9,127.5 L915.9,127.5 L915.9,231.2 L107.7,231.2Z" fill="#ac4ba4" fill-opacity="0.1"/><path d="M107.7,127.5 L235.6,127.5 L249.5,231.0 L334.6,231.0 L348.9,127.5 L915.9,127.5" fill="none" stroke="#ac4ba4" stroke-width="1.6" stroke-linejoin="round"/><path d="M107.7,232.4 L915.9,232.4" fill="none" stroke="#7a6a4a" stroke-width="1" stroke-linejoin="round"/><path d="M107.7,231.3 L915.9,231.3" fill="none" stroke="#31609e" stroke-width="1.8" stroke-linejoin="round"/></svg><span class="t " style="left:23.60px;top:67.29px;font-size:17.5px;line-height:17.5px;color:#ccccdb;letter-spacing:0.284px;-webkit-text-stroke:0.35px #ccccdb;">1.50</span>
<span class="t " style="left:48.70px;top:119.09px;font-size:17.5px;line-height:17.5px;color:#ccccdb;letter-spacing:0.366px;-webkit-text-stroke:0.35px #ccccdb;">1</span>
<span class="t " style="left:13.50px;top:170.89px;font-size:17.5px;line-height:17.5px;color:#ccccdb;letter-spacing:0.301px;-webkit-text-stroke:0.35px #ccccdb;">0.500</span>
<span class="t " style="left:48.70px;top:222.79px;font-size:17.5px;line-height:17.5px;color:#ccccdb;letter-spacing:0.366px;-webkit-text-stroke:0.35px #ccccdb;">0</span>
<span class="t " style="left:128.60px;top:244.19px;font-size:17.5px;line-height:17.5px;color:#ccccdb;letter-spacing:0.041px;-webkit-text-stroke:0.35px #ccccdb;">15:50</span>
<span class="t " style="left:270.40px;top:244.19px;font-size:17.5px;line-height:17.5px;color:#ccccdb;letter-spacing:0.041px;-webkit-text-stroke:0.35px #ccccdb;">15:55</span>
<span class="t " style="left:412.20px;top:244.19px;font-size:17.5px;line-height:17.5px;color:#ccccdb;letter-spacing:0.041px;-webkit-text-stroke:0.35px #ccccdb;">16:00</span>
<span class="t " style="left:554.00px;top:244.19px;font-size:17.5px;line-height:17.5px;color:#ccccdb;letter-spacing:0.041px;-webkit-text-stroke:0.35px #ccccdb;">16:05</span>
<span class="t " style="left:695.80px;top:244.19px;font-size:17.5px;line-height:17.5px;color:#ccccdb;letter-spacing:0.041px;-webkit-text-stroke:0.35px #ccccdb;">16:10</span>
<span class="t " style="left:837.60px;top:244.19px;font-size:17.5px;line-height:17.5px;color:#ccccdb;letter-spacing:0.041px;-webkit-text-stroke:0.35px #ccccdb;">16:15</span><div class="abs" style="left:1px;top:269px;width:950px;height:105.2px;overflow:hidden"><div class="abs" style="left:27.20px;top:16.90px;width:21.00px;height:6.00px;background:#89b174;border-radius:1.5px"></div>
<span class="t " style="left:60.20px;top:10.16px;font-size:18px;line-height:18px;color:#ccccdb;letter-spacing:-0.415px;-webkit-text-stroke:0.36px #ccccdb;">cortex-BETWEEN_1024_B_AND_1_MB</span>
<div class="abs" style="left:385.00px;top:16.90px;width:21.00px;height:6.00px;background:#e2ba53;border-radius:1.5px"></div>
<span class="t " style="left:418.00px;top:10.16px;font-size:18px;line-height:18px;color:#ccccdb;letter-spacing:-0.398px;-webkit-text-stroke:0.36px #ccccdb;">cortex-BETWEEN_10_MB_AND_64_MB</span>
<div class="abs" style="left:27.20px;top:44.00px;width:21.00px;height:6.00px;background:#86cede;border-radius:1.5px"></div>
<span class="t " style="left:60.20px;top:37.26px;font-size:18px;line-height:18px;color:#ccccdb;letter-spacing:-0.351px;-webkit-text-stroke:0.36px #ccccdb;">cortex-BETWEEN_128_MB_AND_512_MB</span>
<div class="abs" style="left:410.90px;top:44.00px;width:21.00px;height:6.00px;background:#e1894c;border-radius:1.5px"></div>
<span class="t " style="left:444.20px;top:37.26px;font-size:18px;line-height:18px;color:#ccccdb;letter-spacing:-0.411px;-webkit-text-stroke:0.36px #ccccdb;">cortex-BETWEEN_1_MB_AND_10_MB</span>
<div class="abs" style="left:27.20px;top:71.00px;width:21.00px;height:6.00px;background:#d1584a;border-radius:1.5px"></div>
<span class="t " style="left:60.20px;top:64.26px;font-size:18px;line-height:18px;color:#ccccdb;letter-spacing:-0.366px;-webkit-text-stroke:0.36px #ccccdb;">cortex-BETWEEN_64_MB_AND_128_MB</span>
<div class="abs" style="left:401.50px;top:71.00px;width:21.00px;height:6.00px;background:#3c76bb;border-radius:1.5px"></div>
<span class="t " style="left:433.70px;top:64.26px;font-size:18px;line-height:18px;color:#ccccdb;letter-spacing:-0.387px;-webkit-text-stroke:0.36px #ccccdb;">cortex-GREATER_THAN_512_MB</span>
<div class="abs" style="left:27.20px;top:97.60px;width:21.00px;height:6.00px;background:#ac4ba4;border-radius:1.5px"></div>
<span class="t " style="left:60.20px;top:90.86px;font-size:18px;line-height:18px;color:#ccccdb;letter-spacing:-0.310px;-webkit-text-stroke:0.36px #ccccdb;">cortex-LESS_THAN_1024_B</span>
<div class="abs" style="left:301.40px;top:97.60px;width:21.00px;height:6.00px;background:#6d5e9c;border-radius:1.5px"></div>
<span class="t " style="left:334.40px;top:90.86px;font-size:18px;line-height:18px;color:#ccccdb;letter-spacing:-0.466px;-webkit-text-stroke:0.36px #ccccdb;">loki-BETWEEN_1024_B_AND_1_MB</span></div></div></article>
<aside class="abs bx" style="left:2034px;top:1058px;width:520px;height:122px;background:#242528;border:1px solid #4b4c50"><div class="abs" style="left:-1px;top:-1px"><span class="t " style="left:12.50px;top:11.11px;font-size:17px;line-height:17px;color:#ececec;letter-spacing:1.931px;font-family:'DejaVu Sans','Liberation Sans',sans-serif;-webkit-text-stroke:0.70px #ececec;">disk_storage_total{cluster=&quot;my-cluster&quot;,</span>
<span class="t " style="left:12.50px;top:38.91px;font-size:17px;line-height:17px;color:#ececec;letter-spacing:1.575px;font-family:'DejaVu Sans','Liberation Sans',sans-serif;-webkit-text-stroke:0.70px #ececec;">disk=&quot;/data&quot;,</span>
<span class="t " style="left:12.50px;top:66.71px;font-size:17px;line-height:17px;color:#ececec;letter-spacing:1.878px;font-family:'DejaVu Sans','Liberation Sans',sans-serif;-webkit-text-stroke:0.70px #ececec;">instance=&quot;minio.default.svc.cluster.local:9000&quot;,</span>
<span class="t " style="left:12.50px;top:94.51px;font-size:17px;line-height:17px;color:#ececec;letter-spacing:1.665px;font-family:'DejaVu Sans','Liberation Sans',sans-serif;-webkit-text-stroke:0.70px #ececec;">job=&quot;integrations/minio&quot;}</span></div></aside>
<svg class="ic" style="left:2884px;top:1032px" width="12" height="12"><path d="M7,2.2H10V10H1.9V7H7Z" fill="#5b5b5d"/></svg>
<footer class="abs" style="left:0;top:1512px;width:2896px;height:12px;background:#000"><div class="abs" style="left:0;top:0;width:2896px;height:2px;background:#3b3c40"></div><div class="abs bx" style="left:18px;top:4.5px;width:2782px;height:40px;border:2px solid #3a3b40;border-radius:22px;background:#121318"></div></footer>
</body></html>
